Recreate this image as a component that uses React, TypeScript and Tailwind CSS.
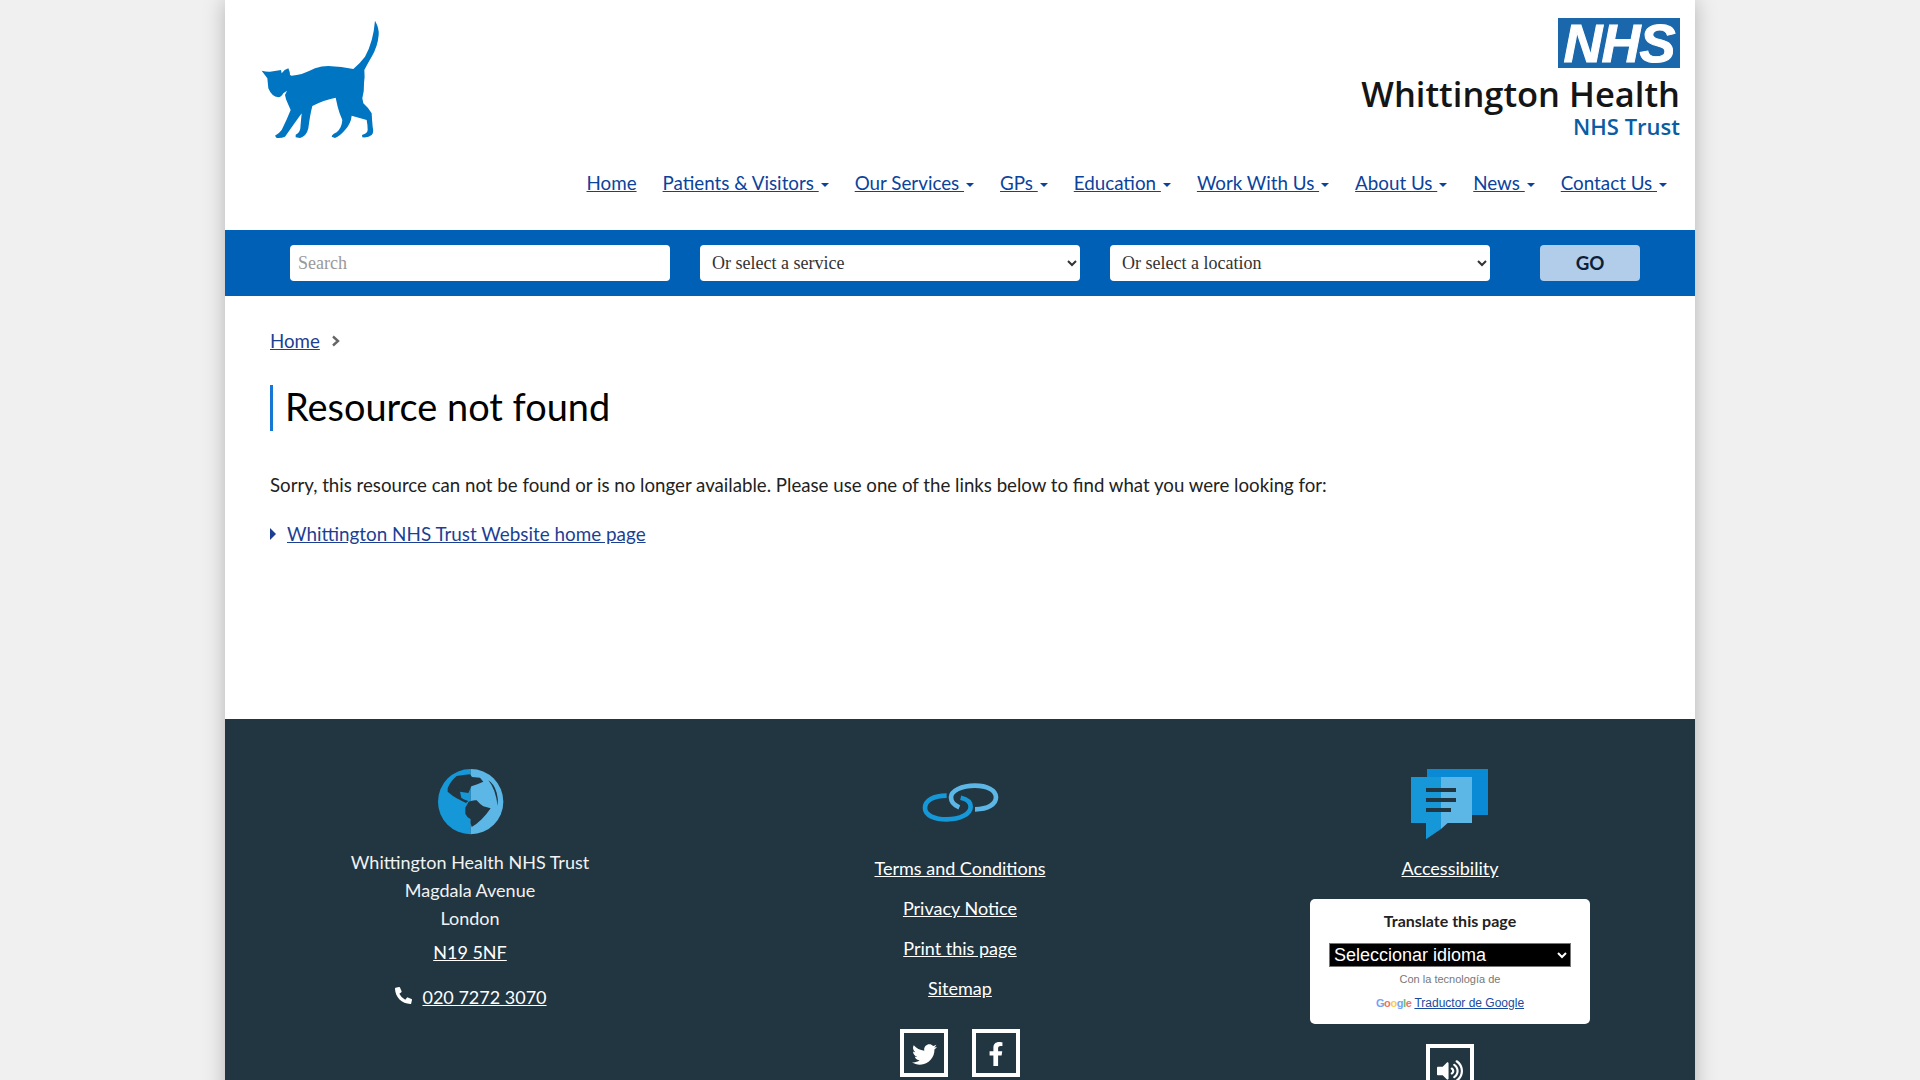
import { FaTwitter, FaFacebookF, FaVolumeUp, FaPhoneAlt } from "react-icons/fa";

const navItems = ["Patients & Visitors ", "Our Services ", "GPs ", "Education ", "Work With Us ", "About Us ", "News ", "Contact Us "];

function Cat() {
  return (
    <svg width="300" height="160" viewBox="0 0 900 480" className="block shrink-0">
      <path
        fill="#0075c2"
        d="M415 310 Q432 325 440 340 Q441 360 443 380 Q447 398 440 405 Q430 414 412 412 L411 405 Q428 400 428 390 Q428 375 425 360 Q400 352 380 347 Q378 370 360 390 Q345 408 330 414 L320 410 Q322 402 335 397 Q350 385 352 360 Q343 340 338 320 L332 293 Q295 300 262 318 Q255 345 250 385 Q245 408 225 414 L212 412 L212 404 Q225 398 226 385 Q228 360 230 340 Q205 375 180 410 Q170 415 155 414 L150 407 Q163 400 170 390 Q185 360 197 330 Q188 310 183 298 L180 285 L186 272 L175 280 Q168 292 160 292 Q140 290 130 265 Q128 245 127 235 L110 212 Q125 216 135 215 L168 210 L170 220 Q178 208 190 205 Q195 215 195 225 L200 227 Q215 226 230 222 Q250 215 270 205 Q290 198 310 198 Q350 200 385 207 Q405 190 420 170 Q445 125 450 62 Q463 85 461 105 Q458 140 440 170 Q428 190 418 210 Q420 230 417 250 Q418 275 412 295 Z"
      />
    </svg>
  );
}

function Logo() {
  return (
    <div className="flex flex-col items-end pt-[18px] pr-[15px]">
      <div className="flex h-[50px] w-[122px] items-center justify-center bg-[#1a67ac]">
        <span className="font-['Liberation_Sans',sans-serif] text-[54px] leading-[50px] font-bold tracking-[-1px] text-white italic [-webkit-text-stroke:1px_white]">NHS</span>
      </div>
      <div className="mt-[7px] font-['Open_Sans',sans-serif] text-[34.5px] leading-[38px] font-semibold whitespace-nowrap text-[#151515]">Whittington Health</div>
      <div className="font-['Open_Sans',sans-serif] text-[22px] leading-[26px] font-semibold whitespace-nowrap text-[#0a5ca3]">NHS Trust</div>
    </div>
  );
}

function Nav() {
  return (
    <nav className="flex h-[46px] items-center justify-end gap-[26px] pr-[28px] text-[18.8px] leading-[28px] text-[#0b439c]">
      <a className="underline" href="#">Home</a>
      {navItems.map((n) => (
        <a key={n} className="whitespace-pre underline" href="#">
          {n}
          <span className="ml-[2px] inline-block h-0 w-0 border-x-[4px] border-t-[4px] border-x-transparent border-t-[#0b439c] align-middle" />
        </a>
      ))}
    </nav>
  );
}

function SearchBar() {
  return (
    <div className="flex h-[66px] items-center bg-[#0060b6] pl-[65px]">
      <input placeholder="Search" className="h-9 w-[380px] rounded-[4px] bg-white px-2 font-['Liberation_Serif',serif] text-[18px] text-[#333] placeholder:text-[#999]" />
      <select defaultValue="s" className="ml-[30px] h-9 w-[380px] rounded-[4px] bg-white px-2 font-['Liberation_Serif',serif] text-[18px] text-[#333]">
        <option value="s">Or select a service</option>
      </select>
      <select defaultValue="l" className="ml-[30px] h-9 w-[380px] rounded-[4px] bg-white px-2 font-['Liberation_Serif',serif] text-[18px] text-[#333]">
        <option value="l">Or select a location</option>
      </select>
      <button className="ml-[50px] h-9 w-[100px] rounded-[4px] bg-[#b2cde9] text-[18.72px] font-bold text-[#0d1f38]">GO</button>
    </div>
  );
}

function Main() {
  return (
    <main className="h-[423px] bg-white pt-[31px] pl-[45px]">
      <div className="flex h-7 items-center text-[18.72px] text-[#1c3f94]">
        <a className="underline" href="#">Home</a>
        <svg width="10" height="12" viewBox="0 0 10 12" className="ml-[11px]">
          <path d="M2 1.5 L7 6 L2 10.5" fill="none" stroke="#666" strokeWidth="2.4" />
        </svg>
      </div>
      <h1 className="mt-[30px] h-[46px] border-l-[3px] border-[#1976d2] pl-3 text-[37.9px] leading-[44px] font-normal text-black">Resource not found</h1>
      <p className="mt-[40px] text-[18.67px] leading-[28px] text-[#222]">Sorry, this resource can not be found or is no longer available. Please use one of the links below to find what you were looking for:</p>
      <div className="mt-[21px] flex items-center text-[18.88px] leading-[28px] text-[#1c3f94]">
        <span className="h-0 w-0 border-y-[6px] border-l-[6px] border-y-transparent border-l-[#1c3f94]" />
        <a className="ml-[11px] underline" href="#">Whittington NHS Trust Website home page</a>
      </div>
    </main>
  );
}

function Globe() {
  return (
    <svg width="100" height="80" viewBox="240 30 300 240" className="block">
      <path d="M392 54 A98 98 0 0 0 392 250 Z" fill="#1597d8" />
      <path d="M392 54 A98 98 0 0 1 392 250 Z" fill="#5db7e6" />
      <path fill="#223642" d="M350 75 Q330 92 323 112 L323 122 Q338 135 350 142 Q365 150 378 156 L385 150 Q370 145 364 140 L360 122 L385 126 L394 106 L412 100 L430 92 L420 80 L396 78 L390 70 Q370 72 350 75 Z" />
      <path fill="#223642" d="M376 170 L386 152 Q400 146 410 148 Q420 160 430 166 L452 172 Q440 190 425 205 Q410 220 395 228 Q390 215 392 205 Q380 198 376 188 Z" />
      <path fill="#223642" d="M445 88 Q462 98 470 125 Q476 145 473 165 Q470 140 463 120 Q455 100 445 88 Z" />
    </svg>
  );
}

function Links() {
  return (
    <svg width="80" height="40" viewBox="0 0 240 120" className="block">
      <g fill="none" strokeWidth="14">
        <path stroke="#5db7e6" d="M165 79 C205 79 228 63 228 43 C228 21 200 8 165 8 C125 8 93 23 93 43 C93 58 105 68 118 73" />
        <path stroke="#1597d8" d="M80 38 C40 38 15 53 15 75 C15 98 45 109 80 109 C120 109 152 93 152 71 C152 58 140 48 122 44" />
      </g>
    </svg>
  );
}

function Chat() {
  return (
    <svg width="80" height="72" viewBox="0 0 240 216" className="block">
      <rect x="48" y="0" width="183" height="138" fill="#0a8ad4" />
      <path d="M0 24 H90 V180 L45 211 V162 H0 Z" fill="#1597d8" />
      <path d="M90 24 H183 V162 H110 L90 180 Z" fill="#5db7e6" />
      <g fill="#223642">
        <rect x="45" y="57" width="90" height="12" />
        <rect x="45" y="87" width="90" height="12" />
        <rect x="45" y="117" width="75" height="12" />
      </g>
    </svg>
  );
}

function SocialBox({ children }: { children: React.ReactNode }) {
  return <a href="#" className="flex h-12 w-12 items-center justify-center border-[4px] border-white text-white">{children}</a>;
}

function Footer() {
  return (
    <footer className="grid h-[400px] grid-cols-3 bg-[#223642] pt-[50px] text-center text-[18px] leading-[28px] text-white">
      <div className="flex flex-col items-center">
        <div className="mt-[-8px] h-[73px] w-[100px]"><Globe /></div>
        <div className="mt-[14px] text-[#f2f2f2]">
          <div>Whittington Health NHS Trust</div>
          <div>Magdala Avenue</div>
          <div>London</div>
        </div>
        <a className="mt-[6px] underline" href="#">N19 5NF</a>
        <div className="mt-[17px] flex items-center">
          <FaPhoneAlt size={17} className="mt-[-4px] ml-[2px]" />
          <a className="ml-[10px] underline" href="#">020 7272 3070</a>
        </div>
      </div>
      <div className="flex flex-col items-center">
        <div className="h-[85px] pt-[14px]"><Links /></div>
        <div className="flex flex-col items-center gap-3">
          <a className="underline" href="#">Terms and Conditions</a>
          <a className="underline" href="#">Privacy Notice</a>
          <a className="underline" href="#">Print this page</a>
          <a className="underline" href="#">Sitemap</a>
        </div>
        <div className="mt-[27px] flex gap-6">
          <SocialBox><FaTwitter size={25} className="mt-[2px]" /></SocialBox>
          <SocialBox><FaFacebookF size={24} className="mt-[2px]" /></SocialBox>
        </div>
      </div>
      <div className="flex flex-col items-center">
        <div className="ml-[2px] h-[85px] w-[80px]"><Chat /></div>
        <a className="underline" href="#">Accessibility</a>
        <div className="mt-[17px] flex h-[125px] w-[280px] flex-col items-center rounded-[5px] bg-white pt-[10px] font-['Liberation_Sans',sans-serif] text-[#777]">
          <div className="font-['Lato',sans-serif] text-[16px] leading-6 font-bold text-[#222]">Translate this page</div>
          <select defaultValue="x" className="mt-[10px] h-6 w-[242px] border border-[#767676] bg-black pl-0 text-[18px] leading-5 text-white">
            <option value="x">Seleccionar idioma</option>
          </select>
          <div className="mt-[6px] text-[11px] leading-[13px]">Con la tecnología de</div>
          <div className="mt-[10px] flex items-center text-[12px] leading-[14px]">
            <span className="text-[11px] font-bold tracking-[-0.4px] opacity-75">
              <span className="text-[#4285f4]">G</span><span className="text-[#ea4335]">o</span><span className="text-[#fbbc05]">o</span><span className="text-[#4285f4]">g</span><span className="text-[#34a853]">l</span><span className="text-[#ea4335]">e</span>
            </span>
            <a className="ml-[3px] text-[#1a4aa0] underline" href="#">Traductor de Google</a>
          </div>
        </div>
        <div className="mt-[20px]"><SocialBox><FaVolumeUp size={26} className="mt-[6px]" /></SocialBox></div>
      </div>
    </footer>
  );
}

export default function App() {
  return (
    <div className="h-[1080px] overflow-hidden bg-[#f0f0f0] font-['Lato',sans-serif]">
      <div className="mx-auto w-[1470px] bg-white shadow-[0_0_20px_rgba(0,0,0,0.25)]">
        <header className="h-[230px] bg-white">
          <div className="flex h-[160px] items-start justify-between"><Cat /><Logo /></div>
          <Nav />
        </header>
        <SearchBar />
        <Main />
        <Footer />
      </div>
    </div>
  );
}
